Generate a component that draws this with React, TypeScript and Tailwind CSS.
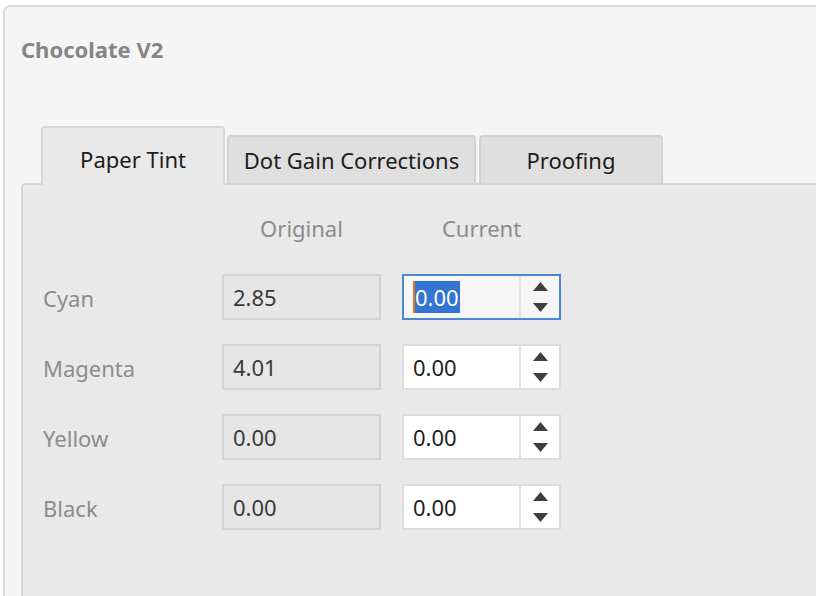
import { useState } from 'react';
import { clsx } from 'clsx';

type Channel = { name: string; original: string; current: string };

const channels: Channel[] = [
    { name: 'Cyan', original: '2.85', current: '0.00' },
    { name: 'Magenta', original: '4.01', current: '0.00' },
    { name: 'Yellow', original: '0.00', current: '0.00' },
    { name: 'Black', original: '0.00', current: '0.00' },
];

const tabs = ['Paper Tint', 'Dot Gain Corrections', 'Proofing'];

function Arrows() {
    return (
        <div className="flex w-[40px] flex-col items-center justify-center gap-[12px] border-l-2 border-[#e3e3e3]">
            <svg width="15" height="9" viewBox="0 0 15 9">
                <polygon points="7.5,0 15,9 0,9" fill="#3f3f3f" />
            </svg>
            <svg width="15" height="9" viewBox="0 0 15 9">
                <polygon points="0,0 15,0 7.5,9" fill="#3f3f3f" />
            </svg>
        </div>
    );
}

function Spinner({ value, focused }: { value: string; focused?: boolean }) {
    return (
        <div
            className={clsx(
                'flex h-[46px] w-[159px] border-2',
                focused ? 'border-[#4a88d4] bg-[#f6f6f6]' : 'border-[#dcdcdc] bg-white'
            )}
        >
            <div className="flex flex-1 items-center pl-[9px]">
                {focused ? (
                    <span className="flex h-[32px] items-center border-l-2 border-[#e07a1f] bg-[#3474d3] pr-[1px] text-white">
                        {value}
                    </span>
                ) : (
                    <span className="text-[#1e1e1e]">{value}</span>
                )}
            </div>
            <Arrows />
        </div>
    );
}

export default function App() {
    const [active, setActive] = useState(0);

    return (
        <div
            className="h-[596px] w-[816px] overflow-hidden bg-white pl-[3px] pt-[5px] text-[22px]"
            style={{ fontFamily: '"Noto Sans", "Open Sans", sans-serif' }}
        >
            <div className="h-full rounded-tl-[7px] border-l-2 border-t-2 border-[#dadada] bg-[#f5f5f5] pl-[16px] pt-[27px]">
                <div className="h-[30px] text-[22px] font-bold leading-[30px] text-[#858585]">Chocolate V2</div>

                {/* tab strip */}
                <div className="ml-[20px] mt-[62px] flex items-end">
                    {tabs.map((t, i) => (
                        <button
                            key={t}
                            onClick={() => setActive(i)}
                            className={clsx(
                                'relative flex items-center justify-center rounded-t-[4px] border-2 border-b-0 text-[22px] text-[#1c1c1c]',
                                i === active
                                    ? 'z-10 -mb-[2px] h-[59px] border-[#d6d6d6] bg-[#e9e9e9] pt-[6px]'
                                    : 'h-[48px] border-[#d2d2d2] bg-[#dfdfdf] pt-[1px]',
                                i === 0 && 'w-[184px]',
                                i === 1 && 'ml-[2px] w-[249px]',
                                i === 2 && 'ml-[3px] w-[184px]'
                            )}
                        >
                            {t}
                        </button>
                    ))}
                </div>

                {/* panel */}
                <div className="h-[500px] rounded-tl-[5px] border-l-2 border-t-2 border-[#d6d6d6] bg-[#e9e9e9] pl-[20px] pt-[28px]">
                    <div className="flex h-[30px] items-center text-[#8c8c8c]">
                        <div className="w-[179px]" />
                        <div className="w-[159px] text-center">Original</div>
                        <div className="ml-[21px] w-[159px] text-center">Current</div>
                    </div>
                    <div className="mt-[31px] flex flex-col gap-[24px]">
                        {channels.map((c, i) => (
                            <div key={c.name} className="flex h-[46px] items-center">
                                <div className="w-[179px] pt-[3px] text-[#8c8c8c]">{c.name}</div>
                                <div className="flex h-[46px] w-[159px] items-center border-2 border-[#d4d4d4] bg-[#e6e6e6] pl-[9px] text-[#3a3a3a]">
                                    {c.original}
                                </div>
                                <div className="ml-[21px]">
                                    <Spinner value={c.current} focused={i === 0} />
                                </div>
                            </div>
                        ))}
                    </div>
                </div>
            </div>
        </div>
    );
}
